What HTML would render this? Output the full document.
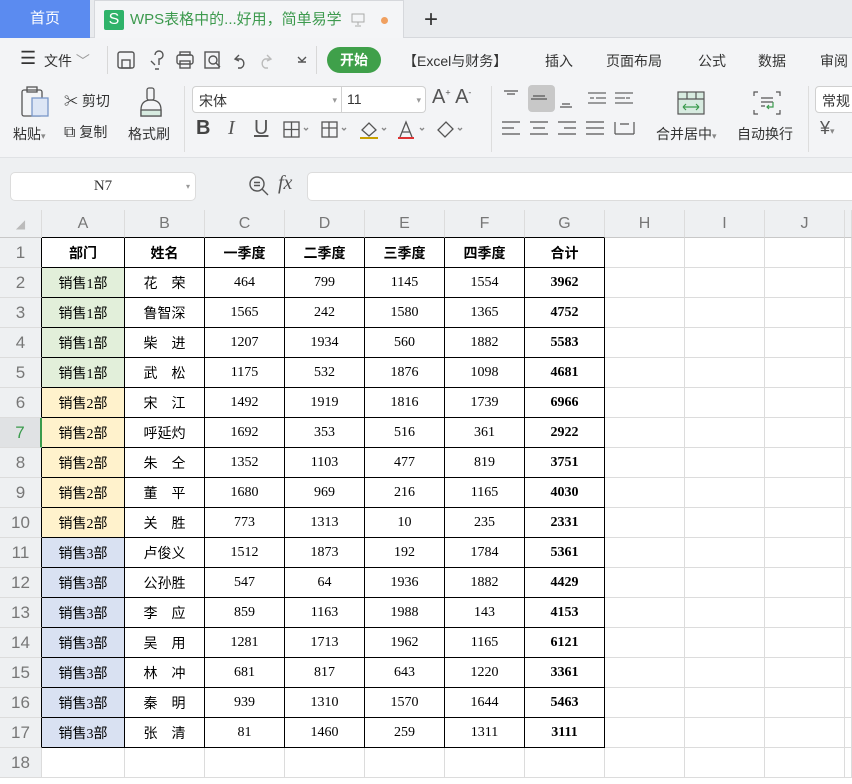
<!DOCTYPE html>
<html><head><meta charset="utf-8">
<style>
*{margin:0;padding:0;box-sizing:border-box}
body{width:852px;height:784px;overflow:hidden;background:#fff;font-family:"Liberation Sans","Noto Sans CJK SC",sans-serif;position:relative;color:#333}
.abs{position:absolute}
#tabbar{left:0;top:0;width:852px;height:38px;background:#e9ebee;border-bottom:1px solid #d6d8dc}
#home{left:0;top:0;width:90px;height:38px;background:#5b8bf0;color:#fff;font-size:15px;line-height:38px;text-align:center}
#tab{left:94px;top:0;width:310px;height:38px;background:#f4f5f7;border:1px solid #d6d8dc;border-bottom:none}
#tb{left:0;top:38px;width:852px;height:120px;background:#f3f4f6;border-bottom:1px solid #e0e2e5}
.m{font-size:14px;color:#333;top:51px;white-space:nowrap}
.l{font-size:14px;color:#333;white-space:nowrap}
#fb{left:0;top:158px;width:852px;height:52px;background:#eef0f2}
table{position:absolute;left:0;top:210px;border-collapse:separate;border-spacing:0;table-layout:fixed;width:852px}
td{padding:0;height:30px;border-right:1px solid #dcdcdc;border-bottom:1px solid #dcdcdc;text-align:center;font-size:14px;font-family:"Liberation Serif","Noto Sans CJK SC",serif;color:#000;white-space:nowrap;overflow:hidden}
tr.h td{height:28px;background:#eef0f2;color:#777;font-family:"Liberation Sans",sans-serif;font-size:16px;border-right:1px solid #dcdcdc;border-bottom:1px solid #c8c8c8}
td.r{background:#eef0f2;color:#777;font-family:"Liberation Sans",sans-serif;font-size:17px;border-right:1px solid #000}
td.d{border-right:1px solid #000;border-bottom:1px solid #000}
tr.h td.t{border-bottom:1px solid #000}
td.g{background:#e2efda}td.y{background:#fff2cc}td.b{background:#d9e1f2}
td.k{font-weight:bold}
tr.hd td.d{font-weight:bold;font-family:"Liberation Sans","Noto Sans CJK SC",sans-serif}
</style></head><body>
<div id="tabbar" class="abs"></div>
<div id="home" class="abs">首页</div>
<div id="tab" class="abs">
 <div class="abs" style="left:9px;top:9px;width:20px;height:20px;background:#2fb36a;border-radius:2px;color:#fff;font-size:16px;line-height:20px;text-align:center">S</div>
 <div class="abs" style="left:35px;top:9px;font-size:15px;color:#3d9a4e;line-height:20px;white-space:nowrap">WPS表格中的...好用，简单易学</div>
 <svg class="abs" style="left:256px;top:12px" width="14" height="14" viewBox="0 0 14 14"><rect x="1" y="1" width="12" height="8" fill="none" stroke="#aaa"/><path d="M7 9v3M4 13h6" stroke="#aaa"/></svg>
 <div class="abs" style="left:286px;top:16px;width:7px;height:7px;border-radius:50%;background:#f0a060"></div>
</div>
<div class="abs" style="left:424px;top:6px;font-size:24px;color:#333">+</div>
<div id="tb" class="abs"></div>
<div class="abs m" style="left:20px;top:48px;font-size:18px">☰</div>
<div class="abs m" style="left:44px">文件 <span style="color:#999">﹀</span></div>
<div class="abs" style="left:107px;top:46px;width:1px;height:28px;background:#d8d8d8"></div>
<svg class="abs" style="left:115px;top:49px" width="200" height="22" viewBox="0 0 200 22" fill="none" stroke="#555" stroke-width="1.4">
<rect x="3" y="3" width="16" height="16" rx="2"/><rect x="7" y="11" width="8" height="8"/>
<path d="M40 6a4 4 0 1 1 4 4v6M36 12l4 4M40 20h4"/>
<rect x="62" y="6" width="16" height="9" rx="2"/><rect x="65" y="3" width="10" height="3"/><rect x="65" y="12" width="10" height="7"/>
<rect x="90" y="3" width="14" height="16"/><circle cx="98" cy="11" r="4"/><path d="M101 14l4 4"/>
<path d="M124 6l-4 4 4 2M120 10h6a5 5 0 0 1 0 9h-3"/>
<path stroke="#bbb" d="M152 6l4 4-4 2M156 10h-6a5 5 0 0 0 0 9h3"/>
<path d="M183 8l4 4 4-4M183 13h8"/>
</svg>
<div class="abs" style="left:316px;top:46px;width:1px;height:28px;background:#d8d8d8"></div>
<div class="abs" style="left:327px;top:47px;width:54px;height:26px;border-radius:13px;background:#3fa04a;color:#fff;font-size:14px;font-weight:bold;line-height:26px;text-align:center">开始</div>
<div class="abs m" style="left:403px">【Excel与财务】</div>
<div class="abs m" style="left:545px">插入</div>
<div class="abs m" style="left:606px">页面布局</div>
<div class="abs m" style="left:698px">公式</div>
<div class="abs m" style="left:758px">数据</div>
<div class="abs m" style="left:820px">审阅</div>
<svg class="abs" style="left:18px;top:86px" width="34" height="34" viewBox="0 0 34 34" fill="none" stroke="#555" stroke-width="1.3"><rect x="4" y="4" width="20" height="26" rx="2"/><rect x="9" y="1" width="10" height="5"/><rect x="14" y="12" width="16" height="18" fill="#dde6f5" stroke="#7a97c8"/></svg>
<div class="abs l" style="left:13px;top:124px">粘贴<span style="font-size:9px;color:#888">▾</span></div>
<div class="abs l" style="left:64px;top:91px">✂ 剪切</div>
<div class="abs l" style="left:64px;top:122px"><span style="font-size:16px">⧉</span> 复制</div>
<svg class="abs" style="left:137px;top:86px" width="28" height="34" viewBox="0 0 28 34" fill="none" stroke="#555" stroke-width="1.3"><rect x="10" y="2" width="7" height="12" rx="2"/><path d="M4 24q0-10 10-10t10 10v6H4z"/><rect x="4" y="24" width="20" height="6" fill="#d7ebe0"/></svg>
<div class="abs l" style="left:128px;top:124px">格式刷</div>
<div class="abs" style="left:184px;top:86px;width:1px;height:66px;background:#ddd"></div>
<div class="abs" style="left:192px;top:86px;width:150px;height:27px;background:#fff;border:1px solid #d0d0d0;border-radius:4px 0 0 4px;font-size:14px;padding:4px 6px">宋体<span style="position:absolute;right:4px;color:#999;font-size:9px;top:8px">▾</span></div>
<div class="abs" style="left:342px;top:86px;width:84px;height:27px;background:#fff;border:1px solid #d0d0d0;border-left:none;border-radius:0 4px 4px 0;font-size:14px;padding:4px 5px">11<span style="position:absolute;right:4px;color:#999;font-size:9px;top:8px">▾</span></div>
<div class="abs" style="left:432px;top:86px;font-size:20px;color:#555">A<sup style="font-size:9px">+</sup> A<sup style="font-size:9px">-</sup></div>
<div class="abs" style="left:196px;top:117px;font-size:20px;color:#444;font-weight:bold">B</div>
<div class="abs" style="left:228px;top:117px;font-size:20px;color:#555;font-style:italic;font-family:'Liberation Serif',serif">I</div>
<div class="abs" style="left:254px;top:117px;font-size:20px;color:#555;text-decoration:underline">U</div>
<svg class="abs" style="left:282px;top:120px" width="190" height="20" viewBox="0 0 190 20" fill="none" stroke="#555" stroke-width="1.3"><rect x="2" y="2" width="15" height="15"/><path d="M9.5 2v15M2 9.5h15"/><path d="M22 8l2 2 2-2" stroke="#888"/>
<rect x="40" y="2" width="15" height="15"/><path d="M40 8h15M47 2v15"/><path d="M60 8l2 2 2-2" stroke="#888"/>
<path d="M80 10l7-7 7 7-7 6z"/><rect x="78" y="17" width="18" height="2" fill="#c8a000" stroke="none"/><path d="M100 8l2 2 2-2" stroke="#888"/>
<path d="M118 17l6-15 6 15M120 12h8"/><rect x="116" y="17" width="16" height="2" fill="#d33" stroke="none"/><path d="M138 8l2 2 2-2" stroke="#888"/>
<path d="M156 10l8-8 7 7-8 8z"/><path d="M176 8l2 2 2-2" stroke="#888"/></svg>
<div class="abs" style="left:491px;top:86px;width:1px;height:66px;background:#ddd"></div>
<div class="abs" style="left:528px;top:85px;width:27px;height:27px;background:#c8c8c8;border-radius:4px"></div>
<svg class="abs" style="left:500px;top:88px" width="140" height="52" viewBox="0 0 140 52" fill="none" stroke="#555" stroke-width="1.2">
<path d="M4 3h14M7 6h8M33 8h12M31 11h16M62 16h8M60 19h12"/>
<path d="M88 5h18M96 10h10M88 15h18M90 10h4" stroke="#666"/><path d="M115 5h18M115 10h10M115 15h18M130 10h-4" stroke="#666"/>
<path d="M2 34h18M2 40h12M2 46h18M30 34h18M33 40h12M30 46h18M58 34h18M64 40h12M58 46h18M86 34h18M86 40h18M86 46h18M115 34v12M134 34v12M115 46h19M120 36h9"/></svg>
<svg class="abs" style="left:676px;top:90px" width="30" height="26" viewBox="0 0 30 26" fill="none" stroke="#555" stroke-width="1.2"><rect x="2" y="2" width="26" height="22" fill="#d7ebe0"/><path d="M2 9h26M11 2v7M20 2v7"/><path d="M7 17h16M7 17l3-3M7 17l3 3M23 17l-3-3M23 17l-3 3" stroke="#3a9b4c"/></svg>
<div class="abs l" style="left:656px;top:124px">合并居中<span style="font-size:9px;color:#888">▾</span></div>
<svg class="abs" style="left:752px;top:90px" width="30" height="26" viewBox="0 0 30 26" fill="none" stroke="#555" stroke-width="1.2"><path d="M6 2H2v4M24 2h4v4M2 20v4h4M28 20v4h-4M9 8h12M9 12h12M9 16h4"/><path d="M21 12v5h-6M17 15l-2 2 2 2" stroke="#3a9b4c"/></svg>
<div class="abs l" style="left:737px;top:124px">自动换行</div>
<div class="abs" style="left:808px;top:86px;width:1px;height:66px;background:#ddd"></div>
<div class="abs" style="left:815px;top:86px;width:50px;height:27px;background:#fff;border:1px solid #d0d0d0;border-radius:4px;font-size:14px;padding:4px 6px;white-space:nowrap">常规</div>
<div class="abs" style="left:820px;top:118px;font-size:18px;color:#555;white-space:nowrap">¥<span style="font-size:9px;color:#888">▾</span></div>
<div id="fb" class="abs"></div>
<div class="abs" style="left:10px;top:172px;width:186px;height:29px;background:#fff;border:1px solid #dcdcdc;border-radius:5px;font-family:'Liberation Serif',serif;font-size:15px;text-align:center;line-height:27px;color:#333">N7<span style="position:absolute;right:5px;font-size:8px;color:#999">▾</span></div>
<svg class="abs" style="left:248px;top:175px" width="22" height="22" viewBox="0 0 22 22" fill="none" stroke="#555" stroke-width="1.4"><circle cx="9" cy="9" r="7"/><path d="M14 14l6 6M6 7.5h6M6 10.5h6"/></svg>
<div class="abs" style="left:278px;top:172px;font-size:20px;font-style:italic;font-family:'Liberation Serif',serif;color:#555">fx</div>
<div class="abs" style="left:307px;top:172px;width:560px;height:29px;background:#fff;border:1px solid #dcdcdc;border-radius:5px"></div>
<table>
<colgroup><col style="width:42px"><col style="width:83px"><col style="width:80px"><col style="width:80px"><col style="width:80px"><col style="width:80px"><col style="width:80px"><col style="width:80px"><col style="width:80px"><col style="width:80px"><col style="width:80px"><col style="width:7px"></colgroup>
<tr class="h"><td style="color:#bbb;font-size:12px">◢</td><td class="t">A</td><td class="t">B</td><td class="t">C</td><td class="t">D</td><td class="t">E</td><td class="t">F</td><td class="t">G</td><td>H</td><td>I</td><td>J</td><td></td></tr>
<tr class="hd"><td class="r">1</td><td class="d">部门</td><td class="d">姓名</td><td class="d">一季度</td><td class="d">二季度</td><td class="d">三季度</td><td class="d">四季度</td><td class="d">合计</td><td></td><td></td><td></td><td></td></tr>
<tr><td class="r">2</td><td class="d g">销售1部</td><td class="d">花　荣</td><td class="d">464</td><td class="d">799</td><td class="d">1145</td><td class="d">1554</td><td class="d k">3962</td><td></td><td></td><td></td><td></td></tr>
<tr><td class="r">3</td><td class="d g">销售1部</td><td class="d">鲁智深</td><td class="d">1565</td><td class="d">242</td><td class="d">1580</td><td class="d">1365</td><td class="d k">4752</td><td></td><td></td><td></td><td></td></tr>
<tr><td class="r">4</td><td class="d g">销售1部</td><td class="d">柴　进</td><td class="d">1207</td><td class="d">1934</td><td class="d">560</td><td class="d">1882</td><td class="d k">5583</td><td></td><td></td><td></td><td></td></tr>
<tr><td class="r">5</td><td class="d g">销售1部</td><td class="d">武　松</td><td class="d">1175</td><td class="d">532</td><td class="d">1876</td><td class="d">1098</td><td class="d k">4681</td><td></td><td></td><td></td><td></td></tr>
<tr><td class="r">6</td><td class="d y">销售2部</td><td class="d">宋　江</td><td class="d">1492</td><td class="d">1919</td><td class="d">1816</td><td class="d">1739</td><td class="d k">6966</td><td></td><td></td><td></td><td></td></tr>
<tr><td class="r" style="background:#e0e2e4;color:#3a9b4c;border-right:2px solid #3a9b4c">7</td><td class="d y">销售2部</td><td class="d">呼延灼</td><td class="d">1692</td><td class="d">353</td><td class="d">516</td><td class="d">361</td><td class="d k">2922</td><td></td><td></td><td></td><td></td></tr>
<tr><td class="r">8</td><td class="d y">销售2部</td><td class="d">朱　仝</td><td class="d">1352</td><td class="d">1103</td><td class="d">477</td><td class="d">819</td><td class="d k">3751</td><td></td><td></td><td></td><td></td></tr>
<tr><td class="r">9</td><td class="d y">销售2部</td><td class="d">董　平</td><td class="d">1680</td><td class="d">969</td><td class="d">216</td><td class="d">1165</td><td class="d k">4030</td><td></td><td></td><td></td><td></td></tr>
<tr><td class="r">10</td><td class="d y">销售2部</td><td class="d">关　胜</td><td class="d">773</td><td class="d">1313</td><td class="d">10</td><td class="d">235</td><td class="d k">2331</td><td></td><td></td><td></td><td></td></tr>
<tr><td class="r">11</td><td class="d b">销售3部</td><td class="d">卢俊义</td><td class="d">1512</td><td class="d">1873</td><td class="d">192</td><td class="d">1784</td><td class="d k">5361</td><td></td><td></td><td></td><td></td></tr>
<tr><td class="r">12</td><td class="d b">销售3部</td><td class="d">公孙胜</td><td class="d">547</td><td class="d">64</td><td class="d">1936</td><td class="d">1882</td><td class="d k">4429</td><td></td><td></td><td></td><td></td></tr>
<tr><td class="r">13</td><td class="d b">销售3部</td><td class="d">李　应</td><td class="d">859</td><td class="d">1163</td><td class="d">1988</td><td class="d">143</td><td class="d k">4153</td><td></td><td></td><td></td><td></td></tr>
<tr><td class="r">14</td><td class="d b">销售3部</td><td class="d">吴　用</td><td class="d">1281</td><td class="d">1713</td><td class="d">1962</td><td class="d">1165</td><td class="d k">6121</td><td></td><td></td><td></td><td></td></tr>
<tr><td class="r">15</td><td class="d b">销售3部</td><td class="d">林　冲</td><td class="d">681</td><td class="d">817</td><td class="d">643</td><td class="d">1220</td><td class="d k">3361</td><td></td><td></td><td></td><td></td></tr>
<tr><td class="r">16</td><td class="d b">销售3部</td><td class="d">秦　明</td><td class="d">939</td><td class="d">1310</td><td class="d">1570</td><td class="d">1644</td><td class="d k">5463</td><td></td><td></td><td></td><td></td></tr>
<tr><td class="r">17</td><td class="d b">销售3部</td><td class="d">张　清</td><td class="d">81</td><td class="d">1460</td><td class="d">259</td><td class="d">1311</td><td class="d k">3111</td><td></td><td></td><td></td><td></td></tr>
<tr><td class="r" style="border-right:1px solid #dcdcdc">18</td><td></td><td></td><td></td><td></td><td></td><td></td><td></td><td></td><td></td><td></td><td></td></tr>
</table>
</body></html>
